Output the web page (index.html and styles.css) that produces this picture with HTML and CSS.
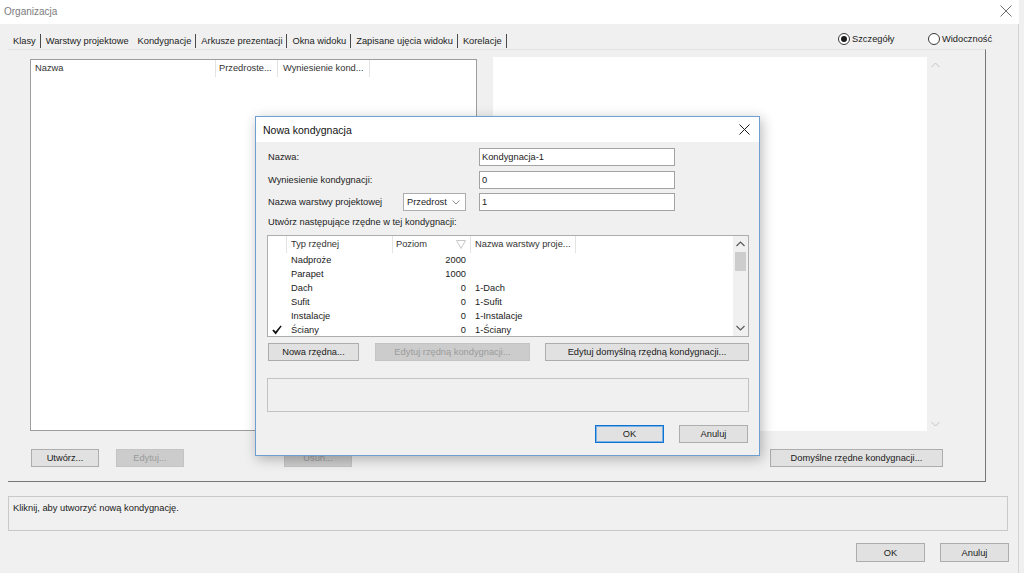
FILE: index.html
```html
<!DOCTYPE html>
<html lang="pl">
<head>
<meta charset="utf-8">
<title>Organizacja</title>
<link rel="stylesheet" href="styles.css">
</head>
<body>
<div class="window">
  <header class="titlebar">
    <span class="title">Organizacja</span>
    <svg class="close" width="12" height="12" viewBox="0 0 12 12"><path d="M0.5 0.5L11.5 11.5M11.5 0.5L0.5 11.5" stroke="#6d6d6d" stroke-width="1" fill="none"/></svg>
  </header>

  <div class="tabbar">
    <nav class="tabs">
      <span class="tab">Klasy</span>
      <span class="tab tab-plain">Warstwy projektowe</span>
      <span class="tab tab-active">Kondygnacje</span>
      <span class="tab">Arkusze prezentacji</span>
      <span class="tab">Okna widoku</span>
      <span class="tab">Zapisane ujęcia widoku</span>
      <span class="tab">Korelacje</span>
    </nav>
    <div class="radios">
      <label class="radio"><span class="radio-dot checked"></span>Szczegóły</label>
      <label class="radio radio-last"><span class="radio-dot"></span>Widoczność</label>
    </div>
  </div>

  <section class="panel">
    <div class="panel-content">
      <div class="listview main-list">
        <div class="lv-header">
          <div class="lv-col col-name">Nazwa</div>
          <div class="lv-col col-prefix">Przedroste...</div>
          <div class="lv-col col-elev">Wyniesienie kond...</div>
        </div>
      </div>
      <div class="preview">
        <div class="preview-area"></div>
        <div class="preview-scroll">
          <svg width="9" height="6" viewBox="0 0 9 6"><path d="M0.5 5L4.5 1L8.5 5" stroke="#c4c4c4" fill="none"/></svg>
          <svg width="9" height="6" viewBox="0 0 9 6"><path d="M0.5 1L4.5 5L8.5 1" stroke="#c4c4c4" fill="none"/></svg>
        </div>
      </div>
    </div>
    <div class="panel-buttons">
      <button class="btn btn-create">Utwórz...</button>
      <button class="btn btn-edit" disabled>Edytuj...</button>
      <button class="btn btn-delete" disabled>Usuń...</button>
      <button class="btn btn-defaults">Domyślne rzędne kondygnacji...</button>
    </div>
  </section>

  <div class="status">Kliknij, aby utworzyć nową kondygnację.</div>

  <footer class="footer">
    <button class="btn btn-footer">OK</button>
    <button class="btn btn-footer">Anuluj</button>
  </footer>

  <div class="dialog">
    <div class="dlg-title">
      <span>Nowa kondygnacja</span>
      <svg class="dlg-close" width="11" height="11" viewBox="0 0 11 11"><path d="M0.5 0.5L10.5 10.5M10.5 0.5L0.5 10.5" stroke="#1a1a1a" stroke-width="1" fill="none"/></svg>
    </div>
    <div class="dlg-body">
      <div class="form-row">
        <span class="form-label">Nazwa:</span>
        <span class="input">Kondygnacja-1</span>
      </div>
      <div class="form-row">
        <span class="form-label">Wyniesienie kondygnacji:</span>
        <span class="input">0</span>
      </div>
      <div class="form-row">
        <span class="form-label form-label-short">Nazwa warstwy projektowej</span>
        <span class="select"><span class="select-text">Przedrost</span><svg width="8" height="5" viewBox="0 0 8 5"><path d="M0.5 0.5L4 4L7.5 0.5" stroke="#8a8a8a" fill="none"/></svg></span>
        <span class="input">1</span>
      </div>
      <div class="section-label">Utwórz następujące rzędne w tej kondygnacji:</div>

      <div class="dlg-list">
        <div class="dlg-table">
          <div class="dl-header">
            <div class="dh c-check"></div>
            <div class="dh c-type">Typ rzędnej</div>
            <div class="dh c-level">Poziom<svg class="sort" width="10" height="9" viewBox="0 0 10 9"><path d="M0.5 0.5H9.5L5 8.5Z" stroke="#c8c8c8" fill="none"/></svg></div>
            <div class="dh c-layer">Nazwa warstwy proje...</div>
          </div>
          <div class="dl-row"><div class="c-check"></div><div class="c-type">Nadproże</div><div class="c-level">2000</div><div class="c-layer"></div></div>
          <div class="dl-row"><div class="c-check"></div><div class="c-type">Parapet</div><div class="c-level">1000</div><div class="c-layer"></div></div>
          <div class="dl-row"><div class="c-check"></div><div class="c-type">Dach</div><div class="c-level">0</div><div class="c-layer">1-Dach</div></div>
          <div class="dl-row"><div class="c-check"></div><div class="c-type">Sufit</div><div class="c-level">0</div><div class="c-layer">1-Sufit</div></div>
          <div class="dl-row"><div class="c-check"></div><div class="c-type">Instalacje</div><div class="c-level">0</div><div class="c-layer">1-Instalacje</div></div>
          <div class="dl-row"><div class="c-check"><svg width="10" height="10" viewBox="0 0 10 10"><path d="M0.3 5.6L1.6 4.4L3.6 6.6L8.6 0.4L9.7 1.3L3.7 9.4Z" fill="#111"/></svg></div><div class="c-type">Ściany</div><div class="c-level">0</div><div class="c-layer">1-Ściany</div></div>
        </div>
        <div class="dlg-scroll">
          <div class="sb-btn"><svg width="9" height="6" viewBox="0 0 9 6"><path d="M0.5 5L4.5 1L8.5 5" stroke="#5a5a5a" stroke-width="1.2" fill="none"/></svg></div>
          <div class="sb-track"><div class="sb-thumb"></div></div>
          <div class="sb-btn"><svg width="9" height="6" viewBox="0 0 9 6"><path d="M0.5 1L4.5 5L8.5 1" stroke="#5a5a5a" stroke-width="1.2" fill="none"/></svg></div>
        </div>
      </div>

      <div class="dlg-buttons">
        <button class="btn btn-new">Nowa rzędna...</button>
        <button class="btn btn-editlvl" disabled>Edytuj rzędną kondygnacji...</button>
        <button class="btn btn-editdef">Edytuj domyślną rzędną kondygnacji...</button>
      </div>

      <div class="dlg-info"></div>

      <div class="dlg-footer">
        <button class="btn btn-dlg btn-default">OK</button>
        <button class="btn btn-dlg">Anuluj</button>
      </div>
    </div>
  </div>
</div>
</body>
</html>
```

FILE: styles.css
```css
* { box-sizing: border-box; }
html, body { margin: 0; padding: 0; }
body {
  width: 1024px;
  height: 573px;
  overflow: hidden;
  background: #f0f0f0;
  font-family: "Liberation Sans", Arial, sans-serif;
  font-size: 9.3px;
  color: #1e1e1e;
}
.window {
  position: relative;
  width: 1024px;
  height: 573px;
  border-right: 5px solid #f0f0f0;
  box-shadow: inset -6px 0 0 -5px #d4d4d4;
}

/* title bar */
.titlebar {
  height: 24px;
  background: #fff;
  display: flex;
  align-items: center;
  justify-content: space-between;
  padding: 0 7px 2px 4px;
}
.title { font-size: 10px; color: #7c7c7c; }
.close { display: block; }

/* tabs */
.tabbar {
  height: 25px;
  display: flex;
  align-items: flex-end;
  padding: 0 19px 1px 13px;
}
.tabs { display: flex; align-items: flex-end; }
.tab {
  height: 14px;
  line-height: 14px;
  padding: 0 4px 0 5px;
  border-right: 1px solid #4a4a4a;
  white-space: nowrap;
  color: #222;
}
.tab:first-child { padding-left: 0; }
.tab-plain { border-right-color: transparent; }
.tab-active { padding-left: 4px; }
.radios { margin-left: auto; align-self: flex-start; margin-top: 9px; display: flex; }
.radio { display: flex; align-items: center; gap: 2px; width: 90px; height: 12px; color: #222; }
.radio-last { width: 72px; }
.radio-dot {
  width: 12px; height: 12px;
  border: 1px solid #3a3a3a;
  border-radius: 50%;
  background: #fff;
  position: relative;
  flex: none;
}
.radio-dot.checked::after {
  content: "";
  position: absolute;
  left: 2px; top: 2px;
  width: 6px; height: 6px;
  border-radius: 50%;
  background: #1a1a1a;
}

/* main panel */
.panel {
  margin-left: 8px;
  width: 978px;
  height: 433px;
  border-top: 1px solid #e2e2e2;
  border-right: 1px solid #777;
  border-bottom: 1px solid #777;
  padding: 7px 42px 0 22px;
}
.panel-content { display: flex; align-items: flex-start; }
.listview { background: #fff; border: 1px solid #9d9d9d; }
.main-list { width: 448px; height: 372px; margin-top: 2px; }
.lv-header { display: flex; height: 17px; }
.lv-col {
  height: 17px;
  line-height: 17px;
  border-right: 1px solid #e3e3e3;
  padding-left: 4px;
  color: #333;
  white-space: nowrap;
  overflow: hidden;
}
.col-name { width: 185px; }
.col-prefix { width: 62px; padding-left: 3px; }
.col-elev { width: 92px; padding-left: 5px; }

.preview { display: flex; margin-left: 16px; height: 374px; }
.preview-area { width: 434px; height: 374px; background: #fff; }
.preview-scroll {
  width: 16px;
  display: flex;
  flex-direction: column;
  justify-content: space-between;
  align-items: center;
  padding: 5px 0 4px;
}
.preview-scroll svg { display: block; }

.panel-buttons { display: flex; margin-top: 18px; }
.btn {
  font-family: inherit;
  font-size: 9.3px;
  color: #1a1a1a;
  background: #e1e1e1;
  border: 1px solid #adadad;
  height: 18px;
  padding: 0;
  margin: 0;
  white-space: nowrap;
}
.btn:disabled { background: #cccccc; border-color: #c4c4c4; color: #9b9b9b; }
.btn-create { width: 68px; margin-left: 1px; }
.btn-edit { width: 68px; margin-left: 17px; }
.btn-delete { width: 68px; margin-left: 100px; }
.btn-defaults { width: 173px; margin-left: auto; }

/* status */
.status {
  margin: 14px 11px 0 8px;
  height: 35px;
  border: 1px solid #c9c9c9;
  padding: 5px 4px;
  line-height: 12px;
  color: #1a1a1a;
}

.footer { display: flex; justify-content: flex-end; gap: 15px; margin-top: 12px; padding-right: 10px; }
.btn-footer { width: 69px; height: 19px; }

/* dialog */
.dialog {
  position: absolute;
  left: 255px;
  top: 116px;
  width: 505px;
  height: 340px;
  border: 1px solid #6f9fd0;
  background: #f0f0f0;
  box-shadow: 2px 3px 12px rgba(0, 0, 0, 0.28);
  z-index: 10;
}
.dlg-title {
  height: 25px;
  background: #fff;
  display: flex;
  align-items: center;
  justify-content: space-between;
  padding: 0 9px 0 7px;
  font-size: 10.5px;
  color: #111;
}
.dlg-close { display: block; }
.dlg-body { padding: 6px 10px 0 11px; }
.form-row { display: flex; align-items: center; height: 18px; padding-left: 1px; }
.form-row:nth-child(2) { margin-top: 5px; }
.form-row:nth-child(3) { margin-top: 4px; }
.form-label { width: 211px; color: #222; }
.form-label-short { width: 135px; }
.input {
  width: 196px;
  height: 18px;
  background: #fff;
  border: 1px solid #a3a3a3;
  padding-left: 2px;
  line-height: 16px;
  color: #1a1a1a;
}
.select {
  width: 63px;
  height: 18px;
  margin-right: 13px;
  background: #fff;
  border: 1px solid #adadad;
  display: flex;
  align-items: center;
  padding: 0 4px 0 3px;
  gap: 4px;
}
.select-text { width: 41px; overflow: hidden; white-space: nowrap; }
.select svg { display: block; flex: none; }
.section-label { margin: 5px 0 0 1px; line-height: 13px; color: #222; }

.dlg-list {
  display: flex;
  margin-top: 6px;
  width: 482px;
  height: 102px;
  background: #fff;
  border: 1px solid #adadad;
  overflow: hidden;
}
.dlg-table { flex: 1; overflow: hidden; }
.dl-header { display: flex; height: 17px; }
.dh {
  height: 17px;
  line-height: 17px;
  border-right: 1px solid #e3e3e3;
  color: #333;
  white-space: nowrap;
}
.c-check { width: 19px; flex: none; }
.c-type { width: 106px; flex: none; padding-left: 4px; }
.c-level { width: 78px; flex: none; text-align: right; padding-right: 5px; }
.c-layer { width: 105px; flex: none; padding-left: 4px; }
.dh.c-level { text-align: left; padding-left: 3px; padding-right: 4px; display: flex; align-items: center; justify-content: space-between; }
.sort { display: block; }
.dl-row { display: flex; height: 14px; line-height: 14px; color: #1a1a1a; white-space: nowrap; }
.dl-row .c-check { display: flex; align-items: center; justify-content: flex-end; padding-right: 5px; }
.dl-row .c-check svg { display: block; }

.dlg-scroll { width: 15px; background: #f0f0f0; display: flex; flex-direction: column; }
.sb-btn { height: 16px; display: flex; align-items: center; justify-content: center; }
.sb-btn svg { display: block; }
.sb-track { flex: 1; }
.sb-thumb { width: 11px; height: 19px; margin: 0 auto; background: #cdcdcd; }

.dlg-buttons { display: flex; margin-top: 6px; }
.btn-new { width: 91px; margin-left: 1px; }
.btn-editlvl { width: 155px; margin-left: 16px; }
.btn-editdef { width: 204px; margin-left: 15px; }

.dlg-info {
  margin-top: 17px;
  width: 482px;
  height: 34px;
  border: 1px solid #c3c3c3;
}
.dlg-footer { display: flex; justify-content: flex-end; gap: 15px; margin-top: 13px; padding-right: 1px; }
.btn-dlg { width: 69px; }
.btn-default { border-color: #0f73d1; box-shadow: inset 0 0 0 1px #7ab0e3; }
```
